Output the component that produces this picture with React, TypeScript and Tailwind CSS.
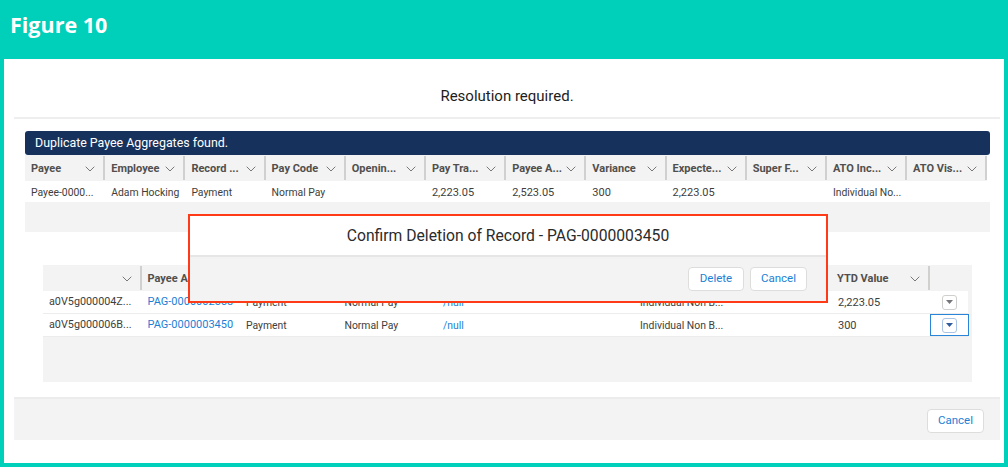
import React from "react";

const topHead = ["Payee", "Employee", "Record ...", "Pay Code", "Openin...", "Pay Tra...", "Payee A...", "Variance", "Expecte...", "Super F...", "ATO Inc...", "ATO Vis..."];
const topRow = ["Payee-0000...", "Adam Hocking", "Payment", "Normal Pay", "", "2,223.05", "2,523.05", "300", "2,223.05", "", "Individual No...", ""];

const rows = [
  { id: "a0V5g000004Z...", pag: "PAG-0000002558", ytd: "2,223.05", active: false },
  { id: "a0V5g000006B...", pag: "PAG-0000003450", ytd: "300", active: true },
];

function Chevron() {
  return (
    <svg width="10" height="6" viewBox="0 0 10 6" fill="none" className="shrink-0">
      <path d="M0.7 0.7 L5 5 L9.3 0.7" stroke="#7a7876" strokeWidth="1" />
    </svg>
  );
}

function HeadCell({ label }: { label: string }) {
  return (
    <div className="flex items-center justify-between pl-[6px] pr-[8px] pt-[2px] border-r-2 border-[#d0d0ce] my-px">
      <span className="font-bold text-[#514f4d] whitespace-nowrap">{label}</span>
      <Chevron />
    </div>
  );
}

function Button({ label, w }: { label: string; w: string }) {
  return (
    <button className={`${w} h-[24px] bg-white border border-[#dddddb] rounded-[4px] text-[#1b7fd6] text-[11.5px]`}>
      {label}
    </button>
  );
}

function RowMenu({ active }: { active: boolean }) {
  return (
    <div className={`flex items-center justify-center h-full ${active ? "border border-[#2a84d8]" : ""}`}>
      <div className={`w-[15px] h-[15px] bg-white border rounded-[3px] flex items-center justify-center ${active ? "border-[#a9c4e4]" : "border-[#cfcfcd]"}`}>
        <svg width="7" height="4" viewBox="0 0 7 4">
          <path d="M0 0 H7 L3.5 4 Z" fill={active ? "#2f5c9c" : "#77757a"} />
        </svg>
      </div>
    </div>
  );
}

export default function App() {
  return (
    <div className="w-[1008px] h-[467px] overflow-hidden bg-[#00cfb9] flex flex-col text-[11px] text-[#3e3e3c] font-['Roboto',sans-serif]">
      <div className="h-[59px] shrink-0 pl-[10px] pt-[10px]">
        <h1 className="text-white text-[21.5px] leading-[30px] font-bold font-['Open_Sans',sans-serif]">Figure 10</h1>
      </div>

      <div className="relative mx-[4px] h-[404px] bg-white flex flex-col">
        <div className="ml-[10px] mr-[4px] h-[60px] shrink-0 border-b-2 border-[#eeeeee] flex items-center justify-center text-[15px] text-[#1d1d1b] pt-[16px]">
          Resolution required.
        </div>

        {/* duplicate aggregates */}
        <div className="mt-[12px] ml-[21px] w-[965px] shrink-0">
          <div className="h-[24px] bg-[#16325c] rounded-[3px] pl-[10px] flex items-center text-white text-[12.4px]">
            Duplicate Payee Aggregates found.
          </div>
          <div className="grid grid-cols-[repeat(12,80.2px)] h-[26px] bg-[#f3f3f3] w-[962px]">
            {topHead.map((h, i) => (
              <HeadCell key={i} label={h} />
            ))}
          </div>
          <div className="grid grid-cols-[repeat(12,80.2px)] h-[21px] items-center bg-white w-[962px] pt-[2px]">
            {topRow.map((c, i) => (
              <div key={i} className={`pl-[6px] whitespace-nowrap ${/^[\d,.]+$/.test(c) ? "text-[11px] pt-[2px]" : "text-[10.4px]"}`}>{c}</div>
            ))}
          </div>
          <div className="h-[30px] bg-[#f3f3f3]" />
        </div>

        {/* payee aggregate records */}
        <div className="mt-[33px] ml-[39px] w-[929px] shrink-0 bg-[#f3f3f3]">
          <div className="grid grid-cols-[repeat(9,98.5px)_39px] h-[26px]">
            <HeadCell label="" />
            <HeadCell label="Payee Aggregate" />
            <div /><div /><div /><div /><div /><div />
            <HeadCell label="YTD Value" />
            <div />
          </div>
          {rows.map((r) => (
            <div key={r.id} className="grid grid-cols-[repeat(9,98.5px)_39px] h-[23px] items-center bg-white w-[925px] border-b border-[#ececec] text-[10.4px]">
              <div className="pl-[6px] pt-px whitespace-nowrap text-[10.8px]">{r.id}</div>
              <div className="pl-[6px] pt-px whitespace-nowrap text-[#1b7fd6] text-[11px]">{r.pag}</div>
              <div className="pl-[6px] pt-px">Payment</div>
              <div className="pl-[6px] pt-px">Normal Pay</div>
              <div className="pl-[6px] pt-px text-[#1b7fd6]">/null</div>
              <div />
              <div className="pl-[6px] pt-px whitespace-nowrap">Individual Non B...</div>
              <div />
              <div className="pl-[7px] pt-[3px] text-[11px]">{r.ytd}</div>
              <RowMenu active={r.active} />
            </div>
          ))}
          <div className="h-[45px]" />
        </div>

        <div className="mt-[15px] ml-[10px] mr-[4px] h-[43px] shrink-0 bg-[#f3f3f3] border-t-2 border-[#ececec] flex items-center justify-end pr-[16px] pt-[2px]">
          <Button label="Cancel" w="w-[57px]" />
        </div>

        {/* confirm modal */}
        <div className="absolute left-[184px] top-[155px] w-[640px] h-[89px] border-2 border-[#ff3a17] flex flex-col bg-[#f3f3f3]">
          <div className="h-[41px] bg-white border-b-2 border-[#e6e6e6] flex items-center justify-center text-[15.7px] text-[#2b2b2b]">
            Confirm Deletion of Record - PAG-0000003450
          </div>
          <div className="flex-1 flex items-center justify-end gap-[6px] pr-[19px]">
            <Button label="Delete" w="w-[56px]" />
            <Button label="Cancel" w="w-[57px]" />
          </div>
        </div>
      </div>
    </div>
  );
}
